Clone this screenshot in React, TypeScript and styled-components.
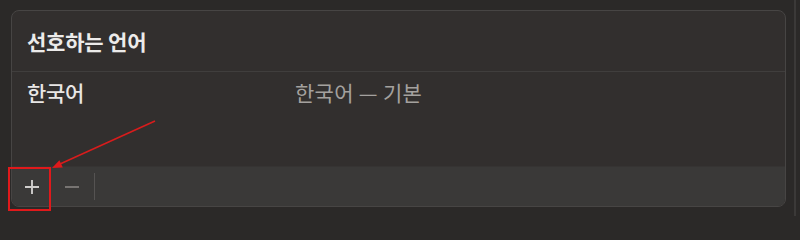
import React from 'react';
import styled, { createGlobalStyle } from 'styled-components';

const GlobalStyle = createGlobalStyle`
  html, body {
    margin: 0;
    padding: 0;
    background-color: #2b2928;
  }
  body {
    font-family: 'Noto Sans CJK KR', 'Noto Sans', sans-serif;
    -webkit-font-smoothing: antialiased;
  }
`;

const Page = styled.div`
  position: relative;
  display: flex;
  align-items: flex-start;
  gap: 8px;
  width: 800px;
  height: 216px;
  padding: 10px 0 0 11px;
  box-sizing: border-box;
  overflow: hidden;
`;

const Panel = styled.section`
  display: flex;
  flex-direction: column;
  width: 775px;
  height: 197px;
  box-sizing: border-box;
  background-color: #322f2e;
  border: 1px solid #474544;
  border-radius: 8px;
  overflow: hidden;
`;

const PanelHeader = styled.header`
  display: flex;
  align-items: center;
  height: 60px;
  padding: 0 15px;
  border-bottom: 1px solid #403e3d;
  font-size: 21px;
  line-height: 24px;
  font-weight: 700;
  color: #ecebea;
  letter-spacing: -0.2px;
`;

const LanguageList = styled.ul`
  flex: 1;
  margin: 0;
  padding: 8px 0 0;
  list-style: none;
`;

const LanguageRow = styled.li`
  display: grid;
  grid-template-columns: 268px 1fr;
  align-items: center;
  height: 24px;
  padding: 0 15px;
  font-size: 21px;
  line-height: 24px;
`;

const Cell = styled.span<{ $muted?: boolean }>`
  color: ${(p) => (p.$muted ? '#a4a19f' : '#e8e6e5')};
  font-weight: ${(p) => (p.$muted ? 400 : 500)};
  letter-spacing: ${(p) => (p.$muted ? '0.3px' : '-0.3px')};
`;

const Footer = styled.footer`
  display: flex;
  align-items: center;
  height: 39px;
  background-color: #3a3938;
  border-top: 1px solid #363433;
`;

const IconButton = styled.button<{ $dim?: boolean }>`
  display: flex;
  align-items: center;
  justify-content: center;
  width: 40px;
  height: 39px;
  padding: 0;
  border: none;
  background: transparent;
  color: ${(p) => (p.$dim ? '#777472' : '#cfcdcc')};
  cursor: pointer;
`;

const Separator = styled.span`
  width: 1px;
  height: 27px;
  margin-left: 2px;
  background-color: #555352;
`;

const WindowEdge = styled.div`
  width: 2px;
  height: 216px;
  margin-top: -10px;
  background-color: #3b3938;
`;

const Annotation = styled.svg`
  position: absolute;
  inset: 0;
  pointer-events: none;
`;

const PlusIcon = () => (
  <svg width="16" height="16" viewBox="0 0 16 16">
    <path d="M8 1v14M1 8h14" stroke="currentColor" strokeWidth="1.9" fill="none" />
  </svg>
);

const MinusIcon = () => (
  <svg width="16" height="16" viewBox="0 0 16 16">
    <path d="M1 8h14" stroke="currentColor" strokeWidth="1.9" fill="none" />
  </svg>
);

export default function App() {
  return (
    <>
      <GlobalStyle />
      <Page>
        <Panel>
          <PanelHeader>선호하는 언어</PanelHeader>
          <LanguageList>
            <LanguageRow>
              <Cell>한국어</Cell>
              <Cell $muted>한국어 — 기본</Cell>
            </LanguageRow>
          </LanguageList>
          <Footer>
            <IconButton aria-label="추가">
              <PlusIcon />
            </IconButton>
            <IconButton $dim aria-label="삭제">
              <MinusIcon />
            </IconButton>
            <Separator />
          </Footer>
        </Panel>
        <WindowEdge />
        <Annotation width="800" height="216" viewBox="0 0 800 216">
          <rect x="9" y="168" width="41" height="42" fill="none" stroke="#e0191b" strokeWidth="2" />
          <line x1="155" y1="121" x2="60" y2="164" stroke="#d81c1c" strokeWidth="1.6" />
          <polygon points="52,168 62.8,167.5 59.4,160.2" fill="#e0191b" />
        </Annotation>
      </Page>
    </>
  );
}
